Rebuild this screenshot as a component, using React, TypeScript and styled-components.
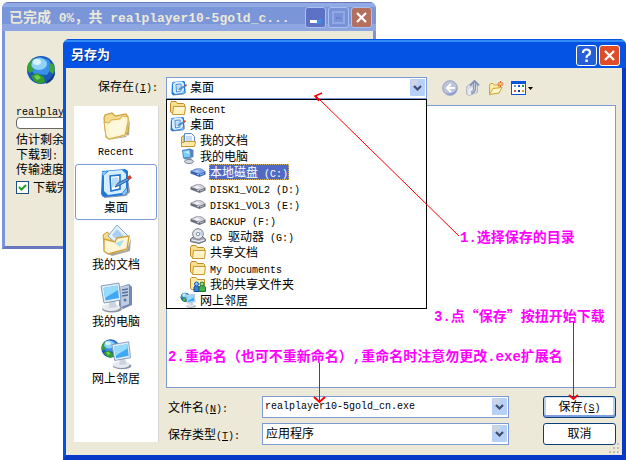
import React from 'react';
import styled, { createGlobalStyle, css } from 'styled-components';

const GlobalStyle = createGlobalStyle`
  *, *::before, *::after { box-sizing: border-box; }
  body {
    margin: 0;
    background: #fff;
    color: #000;
    font: 12px/16px 'Noto Sans CJK SC', sans-serif;
  }
  button, input, select { font: inherit; color: inherit; margin: 0; }
`;

/* ---------- text ---------- */

const Latin = styled.span<{ $size: number }>`
  font-family: 'Liberation Mono', monospace;
  font-size: ${(p) => p.$size}px;
  line-height: 1;
  white-space: pre;
`;

/* Latin runs are set half as wide as the Chinese characters beside them. */
function Mixed({ text, size = 10, accessKey }: { text: string; size?: number; accessKey?: string }) {
  return (
    <>
      {text.split(/([\x20-\x7e]+)/).filter(Boolean).map((run, i) => {
        if (!/^[\x20-\x7e]/.test(run)) return run;
        const at = accessKey ? run.indexOf(accessKey) : -1;
        return (
          <Latin key={i} $size={size}>
            {at < 0 ? run : <>{run.slice(0, at)}<u>{accessKey}</u>{run.slice(at + 1)}</>}
          </Latin>
        );
      })}
    </>
  );
}

/* ---------- icons ---------- */

type IconProps = { size?: number };

const Svg = styled.svg`
  display: block;
  flex: none;
`;

function GlobeShape() {
  return (
    <>
      <circle cx="16" cy="16" r="14" fill="#1c58b8" />
      <path d="M3 14Q5 4 15 3L24 6L27 13L22 21L10 20Z" fill="#3a8fe8" />
      <ellipse cx="14" cy="10" rx="8" ry="6" fill="#8fd2fa" />
      <ellipse cx="12" cy="8" rx="4" ry="3" fill="#d8f3ff" />
      <path d="M3 10L8 4L6 12L9 16L5 19L2 16Z" fill="#36a338" />
      <path d="M6 22L12 19L19 23L20 28L15 30L9 27Z" fill="#2f9c30" />
      <path d="M9 22L13 21L16 24L12 26Z" fill="#7ad04e" />
      <path d="M24 9L28 10L30 16L28 20L24 17Z" fill="#3da53b" />
      <path d="M22 27Q29 23 30 16Q31 26 21 30Z" fill="#123a7a" />
    </>
  );
}

const GlobeIcon = ({ size = 32 }: IconProps) => (
  <Svg width={size} height={size} viewBox="0 0 32 32"><GlobeShape /></Svg>
);

const FolderIcon = ({ size = 32 }: IconProps) => (
  <Svg width={size} height={size} viewBox="0 0 32 32">
    <path d="M8 30L29 25L30 9L26 27Z" fill="#a6a59a" />
    <path d="M4 8L5 5L12 3L15 6L26 4L28 7V22L25 25L9 29L6 27Z" fill="#f3dc90" stroke="#cda23a" strokeWidth="1.2" />
    <path d="M4 12L9 13L11 10L20 9L22 6L28 7V12L25 25L9 29L6 26Z" fill="#fdf4cc" stroke="#d6ae4c" />
    <path d="M9 15L12 12L26 9L24 23L10 27Z" fill="#fff8de" />
  </Svg>
);

const SmallFolderIcon = ({ size = 16 }: IconProps) => (
  <Svg width={size} height={size} viewBox="0 0 16 16">
    <path d="M0.500 3.500L1.500 1.500H6L7.500 3.500H13.500L14.500 4.500V13.500H2.500L0.500 12Z" fill="#f8dd8e" stroke="#bd8b22" />
    <path d="M2.500 14.500L3.500 6.500H15.500L14.500 14.500Z" fill="#fff1c0" stroke="#c99830" />
    <path d="M5 8H14" stroke="#fffdf0" />
  </Svg>
);

const DesktopIcon = ({ size = 32 }: IconProps) => (
  <Svg width={size} height={size} viewBox="0 0 32 32">
    <path d="M5 7L27 3L30 25L26 29L4 31Z" fill="#8a97a8" />
    <path d="M2 4L25 2L28 4V25L24 28L3 30L1 27Z" fill="#1f7ade" />
    <path d="M4 8L9 4L22 3L26 7V21L22 26L8 28L4 24Z" fill="#d5edff" />
    <path d="M2 5L7 4L3 9ZM22 27L27 21V25L24 28Z" fill="#8bc8fb" />
    <path d="M10 9L20 8V22L11 24Z" fill="#fff" stroke="#1f74d2" strokeWidth="1.600" />
    <path d="M12 11L18 10L19 15L12 21Z" fill="#b8dcf8" />
    <path d="M15 20L18 16L28 11L29 13L20 18Z" fill="#57a6e8" stroke="#2a5c9d" />
    <path d="M27 10L30 8L32 11L29 13Z" fill="#d84325" />
  </Svg>
);

const DocumentsIcon = ({ size = 32 }: IconProps) => (
  <Svg width={size} height={size} viewBox="0 0 32 32">
    <path d="M8 30L27 26L31 14L30 27L12 32Z" fill="#a8a59a" />
    <path d="M3 11L7 8L11 11V28L5 27Z" fill="#f7dc8d" stroke="#cb9a31" />
    <path d="M8 12L17 1L28 12L19 22Z" fill="#e5f3fd" stroke="#80a6d0" />
    <path d="M12 11L17 5L24 12L18 17Z" fill="#a9cef8" />
    <path d="M4 15L15 18L17 14L29 12L27 25L8 30L4 27Z" fill="#fff6d5" stroke="#d2a23a" strokeWidth="1.4" />
    <path d="M15 19L24 16L20 23Z" fill="#a4e0f6" />
  </Svg>
);

const SmallDocumentsIcon = ({ size = 16 }: IconProps) => (
  <Svg width={size} height={size} viewBox="0 0 16 16">
    <path d="M1.500 5L4 3.500V14.500H1.500Z" fill="#f8dc87" stroke="#c69127" />
    <path d="M4.500 1.500H11.500L14.500 4.500V12H4.500Z" fill="#f7fbff" stroke="#5f86c5" />
    <path d="M6 5H12M6 7H12M6 9H12" stroke="#8eb6e9" />
    <path d="M1.500 10.500H4L5 9.500H15.500L14.500 14.500H1.500Z" fill="#ffeaaa" stroke="#c99830" />
  </Svg>
);

function MonitorShape() {
  return (
    <>
      <ellipse cx="12" cy="28" rx="10" ry="3.500" fill="#8b94a5" />
      <ellipse cx="11" cy="26.500" rx="9" ry="3.500" fill="#e7ebf0" />
      <path d="M9 20H15L17 26L9 27Z" fill="#cbd4df" />
      <path d="M1 5L19 2L21 19L4 22Z" fill="#e4edf7" stroke="#7f9bbc" />
      <path d="M3.500 7L17.500 4.500L19 17L5.500 19.500Z" fill="#3fa8f2" />
      <path d="M3.500 7L17.500 4.500L18 9L5 17Z" fill="#95dcfc" />
    </>
  );
}

const ComputerIcon = ({ size = 32 }: IconProps) => (
  <Svg width={size} height={size} viewBox="0 0 32 32">
    <path d="M19 6L29 3L32 6V24L23 28L19 25Z" fill="#7389b7" />
    <path d="M20 6L29 4V23L21 26Z" fill="#c0ccdf" />
    <path d="M22 9L28 8M22 12L28 11M22 15L28 14" stroke="#59729f" strokeWidth="1.3" />
    <circle cx="25" cy="19" r="1.500" fill="#5577a9" />
    <MonitorShape />
  </Svg>
);

const SmallComputerIcon = ({ size = 16 }: IconProps) => (
  <Svg width={size} height={size} viewBox="0 0 16 16">
    <path d="M2 2L10 0.500L13.500 2V9L5 11.500L3 10Z" fill="#5a83bd" />
    <path d="M3 3L9.500 2L10.500 8.500L4 9.500Z" fill="#74d0ff" />
    <path d="M4 4L9 3L9.500 6Z" fill="#c5f1ff" />
    <path d="M7 10L11 9.500L12 13H7Z" fill="#8c9cb6" />
    <ellipse cx="9" cy="13.500" rx="4.500" ry="2" fill="#d5dbe5" stroke="#7a8497" />
  </Svg>
);

const NetworkIcon = ({ size = 32 }: IconProps) => (
  <Svg width={size} height={size} viewBox="0 0 32 32">
    <g transform="scale(.66)"><GlobeShape /></g>
    <g transform="translate(11 2) scale(.93)"><MonitorShape /></g>
  </Svg>
);

const DriveIcon = ({ blue = false }: { blue?: boolean }) => (
  <Svg width="16" height="16" viewBox="0 0 16 16">
    <path d="M0.500 7L6 4.500H11L15.500 7.500V10.500L9.500 13L0.500 9.500Z" fill={blue ? '#3c62b3' : '#6a6d7b'} />
    <path d="M1 7L6.500 5H10.500L15 7.500L9.500 10Z" fill={blue ? '#82a9e8' : '#d4d5dc'} />
    <path d="M4 7L7 6L10 7.500L7 8.500Z" fill={blue ? '#b2cff6' : '#f8f8fa'} />
    <path d="M10 11L14 9.500" stroke={blue ? '#8cc0ff' : '#b6b8c6'} />
    <rect x="7" y="10" width="2" height="1" fill={blue ? '#8cc0ff' : '#d8dae2'} />
  </Svg>
);

const CdDriveIcon = () => (
  <Svg width="16" height="16" viewBox="0 0 16 16">
    <path d="M0.500 11L4 8.500H12L15.500 11V13L9 15.500L0.500 13.500Z" fill="#a9adba" stroke="#696d7c" />
    <circle cx="8" cy="6" r="5.300" fill="#e5e7ee" stroke="#757a89" />
    <path d="M8 6L12 3A5 5 0 0 1 12.500 8Z" fill="#bdd4ef" />
    <circle cx="8" cy="6" r="1.700" fill="#fff" stroke="#8c91a0" />
    <path d="M2 12L9 13.500L14 12" stroke="#f6f6f9" fill="none" />
  </Svg>
);

const SharedFolderIcon = () => (
  <Svg width="16" height="16" viewBox="0 0 16 16">
    <path d="M0.500 2.500L1.500 1.500H6L7.500 3.500H14.500V13.500H1.500L0.500 12Z" fill="#ffeba9" stroke="#c2932d" />
    <path d="M4 15.500V11L6 9L9 11V15.500Z" fill="#3180de" stroke="#164a9f" />
    <path d="M9 15.500V11L12 9L15.500 11V15.500Z" fill="#47b349" stroke="#1d742b" />
    <circle cx="6.500" cy="8" r="2" fill="#80c4fa" stroke="#1a57ad" />
    <circle cx="12" cy="8" r="2" fill="#9adf88" stroke="#1d742b" />
  </Svg>
);

const BackIcon = () => (
  <Svg width="16" height="16" viewBox="0 0 16 16">
    <circle cx="8" cy="8" r="7.300" fill="#bcc5db" stroke="#96a1be" />
    <path d="M3 12Q9 16 14 10L15 6Q15 16 7 15Z" fill="#8299d2" />
    <path d="M9 4L5 8L9 12M5 8H13" fill="none" stroke="#fff" strokeWidth="2" />
  </Svg>
);

const UpIcon = () => (
  <Svg width="16" height="16" viewBox="0 0 16 16">
    <path d="M1.500 7L4 4.500H6L7 6L12.500 5.500V12.500L4 15.500L1.500 14Z" fill="#d7dbe4" stroke="#b4b9c6" />
    <path d="M3.500 9L11 7V13L3.500 15Z" fill="#eceef2" />
    <path d="M9.500 2V9Q9.500 12 6 13" fill="none" stroke="#8794b8" strokeWidth="3" />
    <path d="M9.500 3V9Q9.500 11.500 6 12.500" fill="none" stroke="#c3cde4" />
    <path d="M5 5.500L9.500 1L14 5.500" fill="none" stroke="#8794b8" strokeWidth="2" />
  </Svg>
);

const NewFolderIcon = () => (
  <Svg width="16" height="16" viewBox="0 0 16 16">
    <path d="M1.500 14V5L2.500 3.500H5L6.500 5H11V13Z" fill="#fbeaa8" stroke="#cfa53c" />
    <path d="M1.500 14.500L5 8.500L14 7.500L11 13Z" fill="#fff8cf" stroke="#d0a434" />
    <path d="M12.500 1V7M9.500 4H15.500M10.500 2L14.500 6M14.500 2L10.500 6" stroke="#dd5a2b" />
    <circle cx="12.500" cy="4" r="1.200" fill="#ffd85a" />
  </Svg>
);

const ViewsIcon = () => (
  <Svg width="23" height="16" viewBox="0 0 23 16">
    <rect x="0.500" y="1.500" width="14" height="13" fill="#fff" stroke="#0b55dd" />
    <rect x="1" y="1" width="13" height="3" fill="#0b55dd" />
    <path d="M3 5H5V7H3Z" fill="#8490bb" />
    <path d="M7 5H9V7H7Z" fill="#1457e6" />
    <path d="M11 5H13V7H11Z" fill="#269b35" />
    <path d="M3 10H5V12H3Z" fill="#d14f51" />
    <path d="M7 10H9V12H7Z" fill="#123b70" />
    <path d="M11 10H13V12H11Z" fill="#cf9937" />
    <path d="M17 7H22L19.500 10Z" fill="#000" />
  </Svg>
);

const Chevron = () => (
  <svg width="15" height="17" viewBox="0 0 15 17">
    <rect width="15" height="17" rx="1" fill="#b7d0f8" />
    <path d="M1 1H8V4L4 7H1Z" fill="#d0d4df" />
    <path d="M4 7L7.500 10.500L11 7" fill="none" stroke="#3f4a6c" strokeWidth="2.200" />
  </svg>
);

/* ---------- windows ---------- */

const Desktop = styled.main`
  position: relative;
  min-height: 100vh;
  overflow: hidden;
`;

const DownloadWindow = styled.section`
  position: absolute;
  top: 2px;
  left: 2px;
  right: 250px;
  border: solid #7b96d8;
  border-width: 0 3px 3px;
  border-bottom-color: #6878bd;
  border-radius: 7px 7px 0 0;
  background: #ece9d8;
`;

const SaveWindow = styled.section`
  position: absolute;
  inset: 39px 0 0 63px;
  display: flex;
  flex-direction: column;
  border: solid #0453e5;
  border-width: 0 4px 5px 3px;
  border-right-color: #0838c8;
  border-bottom-color: #0838c8;
  border-radius: 7px 7px 0 0;
  background: #ece9d8;
`;

const TitleBar = styled.header<{ $active?: boolean }>`
  display: flex;
  align-items: center;
  gap: 2px;
  height: 29px;
  border-radius: 6px 6px 0 0;
  ${(p) =>
    p.$active
      ? css`
          margin: 0 -4px 0 -3px;
          padding: 4px 6px 0 8px;
          color: #fff;
          text-shadow: 1px 1px #0a2f94;
          background: linear-gradient(#0453e5 0 1px, #2f8cf8 1px 3px, #0453e5 3px);
        `
      : css`
          margin: 0 -3px;
          padding: 2px 4px 0 7px;
          color: #ece9d8;
          background: linear-gradient(#6878bd 0 1px, #91a9e5 1px 5px, #7b96d8 5px 22px, #8da6e2 22px);
        `}
`;

const Title = styled.h1<{ $size: number }>`
  flex: 1;
  margin: 0;
  padding-bottom: 3px;
  overflow: hidden;
  white-space: nowrap;
  font-size: ${(p) => p.$size}px;
  line-height: 20px;
  font-weight: 700;
`;

const tones = {
  muted: '#5d72c4',
  disabled: '#7991d6',
  mutedClose: '#b4705f',
  help: '#245fd9',
  close: '#df4d27',
};

const CaptionButton = styled.button<{ $tone: keyof typeof tones }>`
  display: grid;
  place-items: center;
  flex: none;
  width: 21px;
  height: 21px;
  padding: 0;
  border: 1px solid ${(p) => (p.$tone === 'help' || p.$tone === 'close' ? '#fff' : '#a9c0f0')};
  border-radius: 3px;
  background: ${(p) => tones[p.$tone]};
`;

const CloseGlyph = () => (
  <Svg width="13" height="13" viewBox="0 0 13 13">
    <path d="M2 2L11 11M11 2L2 11" stroke="#fff" strokeWidth="2.200" />
  </Svg>
);

/* ---------- download window content ---------- */

const DownloadBody = styled.div`
  display: flex;
  flex-direction: column;
  padding: 22px 20px 51px 11px;
`;

const GlobeHolder = styled.div`
  padding: 1px 0 16px 9px;
`;

const Line = styled.p`
  height: 15px;
  margin: 0;
  line-height: 15px;
  white-space: nowrap;
`;

const Progress = styled.progress`
  appearance: none;
  width: 100%;
  height: 12px;
  margin: 0 0 2px;
  border: 1px solid #686868;
  border-radius: 4px;
  background: #fff;
  &::-webkit-progress-bar { background: transparent; }
`;

const CheckLine = styled.label`
  display: flex;
  align-items: center;
  gap: 4px;
  margin-top: 3px;
`;

const CheckBox = styled.input`
  appearance: none;
  width: 13px;
  height: 13px;
  border: 1px solid #1c5180;
  background: #fff;
  &:checked {
    background: #fff
      url("data:image/svg+xml,%3Csvg xmlns='http://www.w3.org/2000/svg' viewBox='0 0 11 11'%3E%3Cpath d='M2 5L4.500 7.500L9 3' fill='none' stroke='%2321a121' stroke-width='2'/%3E%3C/svg%3E");
  }
`;

/* ---------- save dialog content ---------- */

const DialogBody = styled.div`
  flex: 1;
  display: grid;
  grid-template-columns: 85px 1fr;
  grid-template-rows: 28px 1fr;
  column-gap: 7px;
  padding: 9px 6px 10px 8px;
`;

const LookInLabel = styled.label`
  justify-self: end;
  padding-right: 1px;
  line-height: 18px;
  white-space: nowrap;
`;

const LookInRow = styled.div`
  display: flex;
  align-items: flex-start;
  gap: 15px;
  padding-right: 82px;
`;

const Combo = styled.div<{ $grow?: boolean }>`
  position: relative;
  display: flex;
  align-items: center;
  height: 22px;
  min-width: 0;
  border: 1px solid #7b9ad6;
  background: #fff;
  ${(p) => p.$grow && 'flex: 1;'}
  > svg:first-child { margin-left: 4px; }
`;

const fieldStyle = css`
  flex: 1;
  min-width: 0;
  height: 20px;
  border: 0;
  outline: 0;
  background: transparent;
`;

const Select = styled.select`
  ${fieldStyle}
  appearance: none;
  padding: 0 20px 2px 3px;
`;

const NameInput = styled.input`
  ${fieldStyle}
  padding: 0 20px 0 2px;
  font: 10px/20px 'Liberation Mono', monospace;
`;

const ChevronSlot = styled.span`
  position: absolute;
  top: 1px;
  right: 1px;
  display: grid;
  pointer-events: none;
`;

const Places = styled.ul`
  position: absolute;
  z-index: 1;
  top: 21px;
  left: -1px;
  right: -1px;
  margin: 0;
  padding: 0;
  border: 1px solid #000;
  background: #fff;
  list-style: none;
`;

const Place = styled.li<{ $level: number }>`
  display: flex;
  align-items: center;
  gap: 3px;
  height: 16px;
  padding-left: ${(p) => 3 + p.$level * 10}px;
  white-space: nowrap;
`;

const PlaceName = styled.span<{ $selected?: boolean }>`
  height: 16px;
  padding: 0 1px;
  line-height: 15px;
  ${(p) => p.$selected && 'color: #fff; background: #5269c3; outline: 1px dotted #d6b75a; outline-offset: -1px;'}
`;

const ToolBar = styled.div`
  display: flex;
  gap: 7px;
  padding-top: 3px;
`;

const ToolButton = styled.button`
  padding: 0;
  border: 0;
  background: none;
`;

const SideBar = styled.nav`
  display: flex;
  flex-direction: column;
  gap: 1px;
  margin: 1px 0 3px;
  padding: 1px;
  border-right: 1px solid #d6d5d0;
  background: #fff;
`;

const SideButton = styled.button<{ $selected?: boolean }>`
  display: flex;
  flex-direction: column;
  align-items: center;
  height: 56px;
  padding: 2px 0;
  border: 1px solid ${(p) => (p.$selected ? '#7b9ad6' : 'transparent')};
  border-radius: 3px;
  background: none;
`;

const MainColumn = styled.div`
  display: flex;
  flex-direction: column;
  gap: 8px;
  min-width: 0;
`;

const FilePane = styled.div`
  flex: 1;
  border: 1px solid #7b9ad6;
  background: #fff;
`;

const Form = styled.form`
  display: grid;
  grid-template-columns: 96px 1fr 107px;
  row-gap: 5px;
  align-items: center;
`;

const FieldLabel = styled.label`
  padding-left: 2px;
  white-space: nowrap;
`;

const DialogButton = styled.button<{ $default?: boolean }>`
  height: 22px;
  margin-left: 34px;
  padding: 0 0 2px;
  border: 1px solid #0b3f7c;
  border-radius: 3px;
  line-height: 18px;
  background: #fff;
  ${(p) => p.$default && 'box-shadow: inset 0 -2px #7e9ee0, inset 2px 0 #b9cff5, inset -2px 0 #b9cff5, inset 0 1px #d4e2fb;'}
`;

const Grip = styled.svg`
  position: absolute;
  right: 2px;
  bottom: 1px;
`;

/* ---------- annotations ---------- */

const Arrows = styled.svg`
  position: absolute;
  inset: 0;
  z-index: 2;
  width: 100%;
  height: 100%;
  pointer-events: none;
`;

const Note = styled.p<{ $x: number; $y: number }>`
  position: absolute;
  z-index: 2;
  left: ${(p) => p.$x}px;
  top: ${(p) => p.$y}px;
  margin: 0;
  color: #f0f;
  font-size: 14px;
  line-height: 18px;
  font-weight: 700;
  white-space: nowrap;
`;

/* ---------- data ---------- */

const places: { name: string; level: number; icon: React.ReactNode; selected?: boolean }[] = [
  { name: 'Recent', level: 0, icon: <SmallFolderIcon /> },
  { name: '桌面', level: 0, icon: <DesktopIcon size={16} /> },
  { name: '我的文档', level: 1, icon: <SmallDocumentsIcon /> },
  { name: '我的电脑', level: 1, icon: <SmallComputerIcon /> },
  { name: '本地磁盘 (C:)', level: 2, icon: <DriveIcon blue />, selected: true },
  { name: 'DISK1_VOL2 (D:)', level: 2, icon: <DriveIcon /> },
  { name: 'DISK1_VOL3 (E:)', level: 2, icon: <DriveIcon /> },
  { name: 'BACKUP (F:)', level: 2, icon: <DriveIcon /> },
  { name: 'CD 驱动器 (G:)', level: 2, icon: <CdDriveIcon /> },
  { name: '共享文档', level: 2, icon: <SmallFolderIcon /> },
  { name: 'My Documents', level: 2, icon: <SmallFolderIcon /> },
  { name: '我的共享文件夹', level: 2, icon: <SharedFolderIcon /> },
  { name: '网上邻居', level: 1, icon: <NetworkIcon size={16} /> },
];

const shortcuts = [
  { name: 'Recent', icon: <FolderIcon /> },
  { name: '桌面', icon: <DesktopIcon />, selected: true },
  { name: '我的文档', icon: <DocumentsIcon /> },
  { name: '我的电脑', icon: <ComputerIcon /> },
  { name: '网上邻居', icon: <NetworkIcon /> },
];

const tools = [
  { name: '后退', icon: <BackIcon /> },
  { name: '向上一级', icon: <UpIcon /> },
  { name: '新建文件夹', icon: <NewFolderIcon /> },
  { name: '查看', icon: <ViewsIcon /> },
];

export default function App() {
  return (
    <Desktop lang="zh-CN">
      <GlobalStyle />

      <DownloadWindow>
        <TitleBar>
          <Title $size={14}><Mixed text="已完成 0%，共 realplayer10-5gold_c..." size={13} /></Title>
          <CaptionButton $tone="muted" aria-label="最小化">
            <Svg width="13" height="13" viewBox="0 0 13 13">
              <path d="M6 10L12 8V12L7 13Z" fill="#3393f2" />
              <rect x="1" y="9" width="7" height="3" fill="#fff" />
            </Svg>
          </CaptionButton>
          <CaptionButton $tone="disabled" aria-label="最大化" disabled>
            <Svg width="13" height="13" viewBox="0 0 13 13">
              <path d="M1 1H12V12H1Z" fill="none" stroke="#90a8e5" strokeWidth="2" />
              <path d="M4 7H9" stroke="#5d72c4" />
            </Svg>
          </CaptionButton>
          <CaptionButton $tone="mutedClose" aria-label="关闭"><CloseGlyph /></CaptionButton>
        </TitleBar>
        <DownloadBody>
          <GlobeHolder><GlobeIcon size={32} /></GlobeHolder>
          <Line><Mixed text="realplayer10-5gold_cn.exe" /></Line>
          <Progress value={0} max={100} aria-label="下载进度" />
          <Line>估计剩余时间</Line>
          <Line><Mixed text="下载到:" /></Line>
          <Line>传输速度</Line>
          <CheckLine><CheckBox type="checkbox" defaultChecked />下载完毕</CheckLine>
        </DownloadBody>
      </DownloadWindow>

      <SaveWindow role="dialog" aria-label="另存为">
        <TitleBar $active>
          <Title $size={13}>另存为</Title>
          <CaptionButton $tone="help" aria-label="帮助">
            <Svg width="13" height="15" viewBox="0 0 13 15">
              <path d="M3 5Q3 1.500 6.500 1.500Q10 1.500 10 4.500Q10 6.500 7.500 7.500Q6.500 8 6.500 10" fill="none" stroke="#fff" strokeWidth="2.200" />
              <rect x="5.300" y="11.500" width="2.500" height="2.500" fill="#fff" />
            </Svg>
          </CaptionButton>
          <CaptionButton $tone="close" aria-label="关闭"><CloseGlyph /></CaptionButton>
        </TitleBar>

        <DialogBody>
          <LookInLabel htmlFor="look-in"><Mixed text="保存在(I):" accessKey="I" /></LookInLabel>
          <LookInRow>
            <Combo $grow>
              <DesktopIcon size={16} />
              <Select id="look-in"><option>桌面</option></Select>
              <ChevronSlot><Chevron /></ChevronSlot>
              <Places role="listbox" aria-label="保存在">
                {places.map((p) => (
                  <Place key={p.name} role="option" aria-selected={!!p.selected} $level={p.level}>
                    {p.icon}
                    <PlaceName $selected={p.selected}><Mixed text={p.name} /></PlaceName>
                  </Place>
                ))}
              </Places>
            </Combo>
            <ToolBar>
              {tools.map((t) => <ToolButton key={t.name} aria-label={t.name}>{t.icon}</ToolButton>)}
            </ToolBar>
          </LookInRow>

          <SideBar>
            {shortcuts.map((s) => (
              <SideButton key={s.name} $selected={s.selected}>
                {s.icon}
                <span><Mixed text={s.name} /></span>
              </SideButton>
            ))}
          </SideBar>

          <MainColumn>
            <FilePane />
            <Form onSubmit={(e) => e.preventDefault()}>
              <FieldLabel htmlFor="file-name"><Mixed text="文件名(N):" accessKey="N" /></FieldLabel>
              <Combo>
                <NameInput id="file-name" defaultValue="realplayer10-5gold_cn.exe" />
                <ChevronSlot><Chevron /></ChevronSlot>
              </Combo>
              <DialogButton type="submit" $default><Mixed text="保存(S)" accessKey="S" /></DialogButton>
              <FieldLabel htmlFor="file-type"><Mixed text="保存类型(T):" accessKey="T" /></FieldLabel>
              <Combo>
                <Select id="file-type"><option>应用程序</option></Select>
                <ChevronSlot><Chevron /></ChevronSlot>
              </Combo>
              <DialogButton type="button">取消</DialogButton>
            </Form>
          </MainColumn>
        </DialogBody>
        <Grip width="11" height="11" viewBox="0 0 11 11">
          <path d="M8 0h2v2h-2zM4 4h2v2h-2zM8 4h2v2h-2zM0 8h2v2h-2zM4 8h2v2h-2zM8 8h2v2h-2z" fill="#c3bfae" />
        </Grip>
      </SaveWindow>

      <Arrows fill="none" stroke="#f00">
        <path d="M459 236L316 96" />
        <path d="M322 93L315 96L319 101" strokeWidth="1.500" />
        <path d="M319.500 363V401" />
        <path d="M314 397L319.500 402L325 397" strokeWidth="2" />
        <path d="M573.500 322V398" />
        <path d="M569 395L573.500 399L578 395" strokeWidth="2" />
      </Arrows>
      <Note $x={460} $y={227}><Mixed text="1.选择保存的目录" size={14} /></Note>
      <Note $x={168} $y={346}><Mixed text="2.重命名（也可不重新命名）,重命名时注意勿更改.exe扩展名" size={14} /></Note>
      <Note $x={434} $y={306}><Mixed text="3.点“保存”按扭开始下载" size={14} /></Note>
    </Desktop>
  );
}
